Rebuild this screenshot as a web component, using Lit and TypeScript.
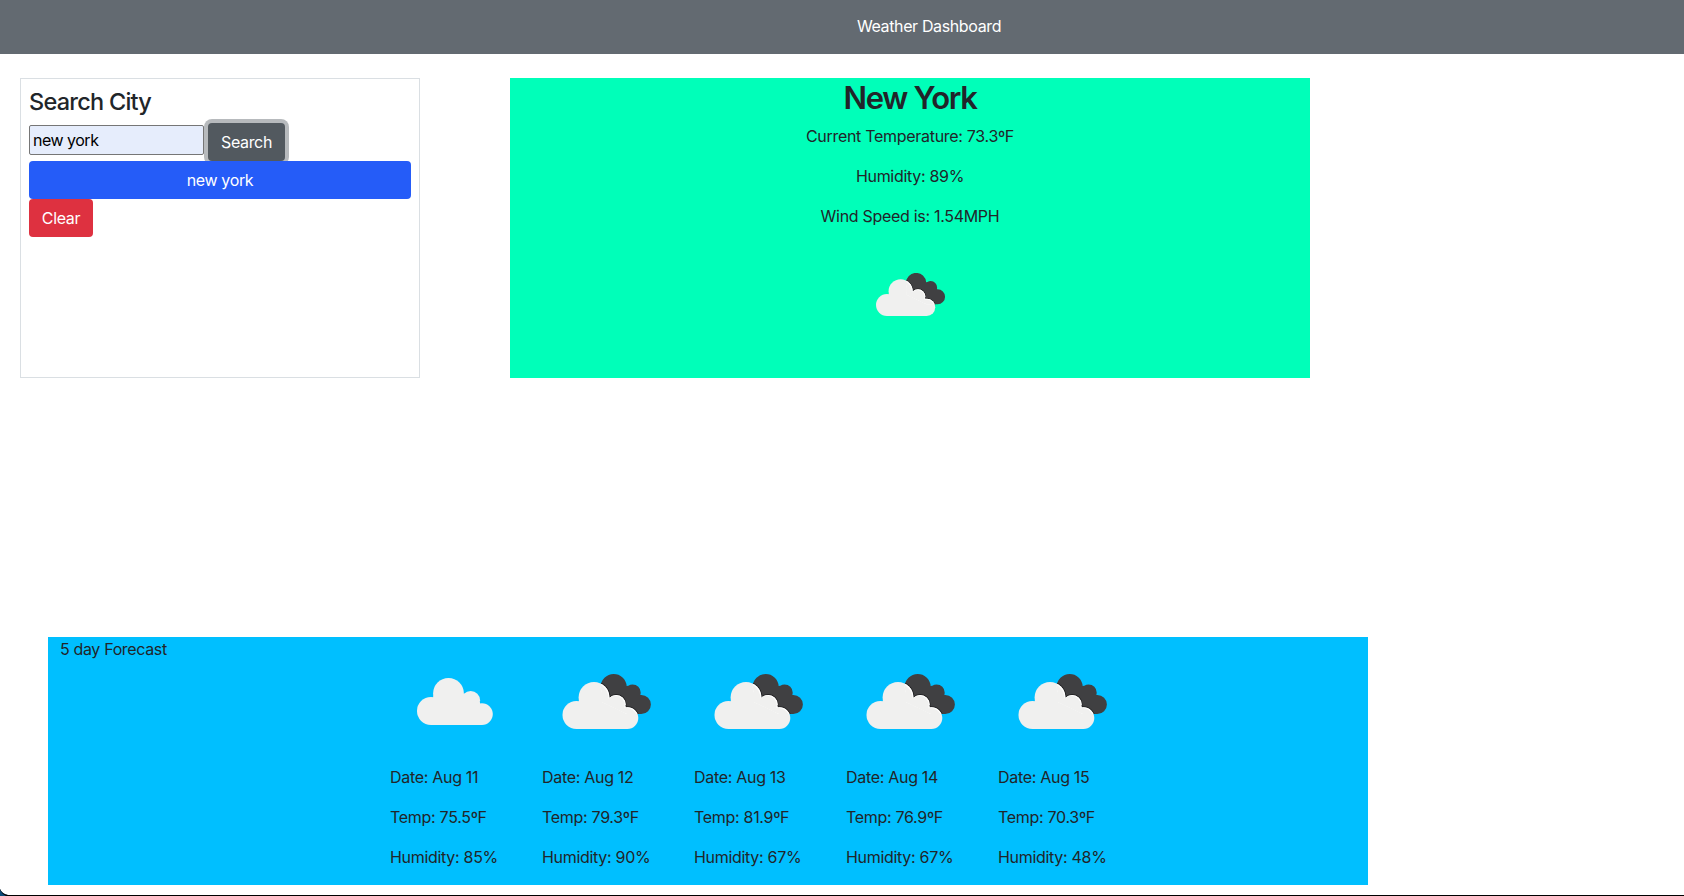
import { LitElement, html, css, svg } from "lit";
import { customElement, property } from "lit/decorators.js";

const lightCloud = svg`
  <circle cx="14" cy="33" r="14"/><circle cx="31.5" cy="15.4" r="15.4"/>
  <circle cx="53.7" cy="22.3" r="9.4"/><circle cx="64.9" cy="36.1" r="10.9"/>
  <path d="M14 47V30L17 16H46.6L54 14L63 24.5L65 47Z"/>`;

@customElement("weather-icon")
export class WeatherIcon extends LitElement {
  @property() kind = "broken";
  @property({ type: Number }) size = 128;

  static styles = css`
    :host { display: block; }
    svg { display: block; }
  `;

  render() {
    if (this.kind === "cloudy") {
      return html`<svg width=${this.size} height=${this.size} viewBox="0 0 128 128">
        <g fill="#f0f0ef" transform="translate(27 41)">${lightCloud}</g>
      </svg>`;
    }
    return html`<svg width=${this.size} height=${this.size} viewBox="0 0 128 128">
      <defs><clipPath id="back">
        <circle cx="71.7" cy="50" r="13"/><circle cx="90.6" cy="55.6" r="8.1"/>
        <circle cx="99.3" cy="67.5" r="9.6"/>
        <path d="M60 52L84.6 49L91 48L98.5 58L99 77H85L60 65Z"/>
      </clipPath></defs>
      <g clip-path="url(#back)">
        <rect width="128" height="128" fill="#404042"/>
        <g transform="translate(20.5 45)" fill="#222224" stroke="#222224" stroke-width="2">${lightCloud}</g>
      </g>
      <g transform="translate(20.5 45)" fill="#f0f0ef">${lightCloud}</g>
      <g clip-path="url(#back)">
        <g transform="translate(20.5 45)" fill="#ffffff">${lightCloud}</g>
        <g transform="translate(19.6 45.9)" fill="#f0f0ef">${lightCloud}</g>
      </g>
    </svg>`;
  }
}

const days = [
  { date: "Aug 11", temp: "75.5", humidity: 85, kind: "cloudy" },
  { date: "Aug 12", temp: "79.3", humidity: 90, kind: "broken" },
  { date: "Aug 13", temp: "81.9", humidity: 67, kind: "broken" },
  { date: "Aug 14", temp: "76.9", humidity: 67, kind: "broken" },
  { date: "Aug 15", temp: "70.3", humidity: 48, kind: "broken" },
];

@customElement("app-root")
export class AppRoot extends LitElement {
  static styles = css`
    :host {
      display: block; position: relative; box-sizing: border-box; height: 896px; overflow: hidden;
      background: #fff; color: #212529;
      font: 400 16px/24px Inter, "Liberation Sans", sans-serif; letter-spacing: -0.3px;
    }
    * { box-sizing: border-box; }
    h1, h2, p { margin: 0; font-weight: 500; }
    p { font-weight: 400; margin-bottom: 16px; }
    header { height: 54px; padding: 14px 0 0 174px; text-align: center; background: #636a71; color: #fff; letter-spacing: -0.37px; }
    .top { display: flex; gap: 90px; padding: 24px 20px 0; }
    .search { width: 400px; height: 300px; padding: 8px; border: 1px solid #dadfe3; }
    h2 { font-size: 23.5px; line-height: 29px; margin-bottom: 7px; letter-spacing: -0.75px; }
    .form { display: flex; gap: 4px; height: 38px; }
    input {
      width: 175px; height: 30px; margin-top: 2px; padding: 1px 3px; border: 1px solid #767676; border-radius: 2px;
      background: #e6edfc; color: #000; font: inherit; letter-spacing: -0.5px; outline: 0;
    }
    button {
      display: block; height: 38px; padding: 0; border: 0; border-radius: 4px;
      color: #fff; font: inherit; letter-spacing: -0.35px;
    }
    .go { width: 77px; background: #52595f; box-shadow: 0 0 0 4px #b7babd; }
    .city { position: relative; width: 100%; background: #255cf8; }
    .clear { width: 64px; background: #de3140; }
    .current { width: 800px; height: 300px; background: #00ffb9; text-align: center; }
    .current h1 { font-size: 31px; line-height: 38px; padding-top: 1px; margin-bottom: 7px; font-weight: 600; letter-spacing: -1.3px; }
    .current weather-icon { width: 100px; margin: 0 auto; }
    .forecast { display: flex; width: 1320px; height: 248px; margin: 259px 0 0 48px; padding-left: 12px; background: #00bfff; }
    .label { width: 330px; letter-spacing: -0.35px; }
    .days { display: flex; gap: 24px; }
    .day { width: 128px; white-space: nowrap; }
    .edge { position: absolute; inset: auto 0 0 0; height: 12px; display: block; }
  `;

  render() {
    return html`
      <header>Weather Dashboard</header>
      <div class="top">
        <section class="search">
          <h2>Search City</h2>
          <div class="form"><input .value=${"new york"} /><button class="go">Search</button></div>
          <button class="city">new york</button>
          <button class="clear">Clear</button>
        </section>
        <section class="current">
          <h1>New York</h1>
          <p>Current Temperature: 73.3ºF</p>
          <p>Humidity: 89%</p>
          <p>Wind Speed is: 1.54MPH</p>
          <weather-icon size="100"></weather-icon>
        </section>
      </div>
      <section class="forecast">
        <div class="label">5 day Forecast</div>
        <div class="days">
          ${days.map((d) => html`<div class="day">
            <weather-icon kind=${d.kind}></weather-icon>
            <p>Date: ${d.date}</p>
            <p>Temp: ${d.temp}ºF</p>
            <p>Humidity: ${d.humidity}%</p>
          </div>`)}
        </div>
      </section>
      <svg class="edge" width="1684" height="12">
        <path d="M0 5Q2 10 8 11V12H0Z" fill="#0b4a78"/>
        <path d="M0 5Q2 10 8 11H1684V12H6Q2 10 0 6Z" fill="#000"/>
      </svg>
    `;
  }
}
